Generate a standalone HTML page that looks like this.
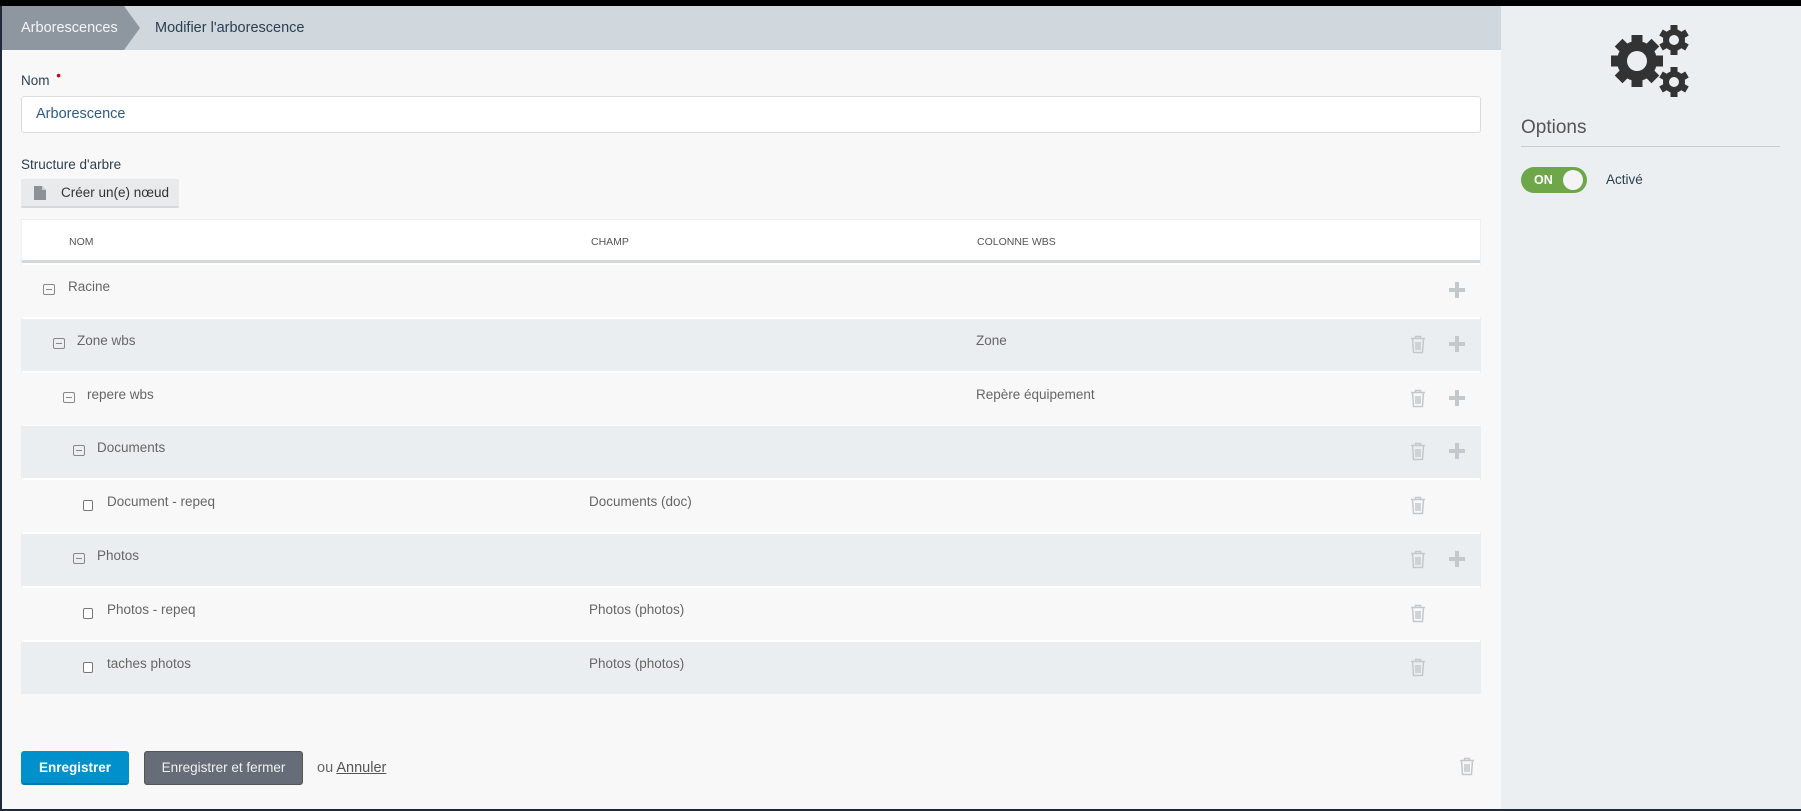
<!DOCTYPE html>
<html><head><meta charset="utf-8"><style>
*{box-sizing:border-box;margin:0;padding:0}
body{width:1801px;height:811px;overflow:hidden;background:#1e2a38;font-family:"Liberation Sans",sans-serif;position:relative}
.topb{position:absolute;left:0;top:0;width:1801px;height:6px;background:#000}
.main{position:absolute;left:2px;top:6px;width:1499px;height:803px;background:#f8f8f8}
.side{position:absolute;left:1501px;top:6px;width:300px;height:803px;background:#eceff1}
.hdr{position:absolute;left:0;top:0;width:1499px;height:44px;background:#d0d8de}
.crumb1{position:absolute;left:0;top:0;width:122px;height:44px;background:#8e969f;color:#f4f6f8;font-size:14.5px;line-height:44px;padding-left:19px}
.arrow{position:absolute;left:122px;top:0;width:0;height:0;border-top:22px solid transparent;border-bottom:22px solid transparent;border-left:16px solid #8e969f}
.crumb2{position:absolute;left:153px;top:0;line-height:44px;font-size:14.5px;color:#2c3e50}
.abs{position:absolute}
.lbl{font-size:13.5px;color:#2c3e50}
.row{position:absolute;left:19px;width:1460px;height:52px;font-size:13.5px;color:#666}
.row span{position:absolute;top:14px}
.mi{position:absolute;top:19px;width:12px;height:11px;border:1px solid #888;border-radius:2px}
.mi:after{content:"";position:absolute;left:2px;top:4px;width:6px;height:1px;background:#888}
.cb{position:absolute;top:20px;width:10px;height:11px;border:1px solid #777;border-radius:2px;background:#fff}
.tr{position:absolute;left:1389px;top:16px}
.pl{position:absolute;left:1428px;top:17px}
</style></head><body>
<div class="topb"></div>
<div class="main">
 <div class="hdr"><div class="crumb1">Arborescences</div><div class="arrow"></div><div class="crumb2">Modifier l'arborescence</div></div>
 <div class="abs lbl" style="left:19px;top:67px">Nom <span style="color:#d0021b;position:relative;top:-5px;left:3px">•</span></div>
 <div class="abs" style="left:19px;top:90px;width:1460px;height:37px;background:#fff;border:1px solid #d8dcdf;border-radius:3px;font-size:14.5px;color:#2a5c8a;line-height:35px;padding-left:14px">Arborescence</div>
 <div class="abs lbl" style="left:19px;top:151px">Structure d'arbre</div>
 <div class="abs" style="left:19px;top:173px;width:158px;height:29px;background:#e8eaec;border-bottom:2px solid #d4d8db;border-radius:2px;font-size:13.5px;color:#333;line-height:28px;padding-left:40px">
  <svg class="abs" style="left:13px;top:7px" width="12" height="14" viewBox="0 0 12 14"><path d="M0 0H8L12 4V14H0Z" fill="#8a9198"/><path d="M8 0V4H12" fill="#c9ced2"/></svg>Créer un(e) nœud</div>
 <div class="abs" style="left:19px;top:213px;width:1460px;height:475px;background:#fff;border:1px solid #eceef0;border-bottom:2px solid #d4d8db">
  <div class="abs" style="left:0;top:0;width:1458px;height:43px;border-bottom:3px solid #d4d8db;font-size:10.5px;color:#555">
   <span class="abs" style="left:47px;top:16px">NOM</span><span class="abs" style="left:569px;top:16px">CHAMP</span><span class="abs" style="left:955px;top:16px">COLONNE WBS</span>
  </div>
 </div>
 <div class="row" style="top:259px;background:#f8f8f8"><div class="mi" style="left:22px"></div><span style="left:47px">Racine</span>
  <svg class="pl" width="16" height="16" viewBox="0 0 16 16"><path d="M6 0h4v6h6v4h-6v6h-4v-6h-6v-4h6z" fill="#c3c8cd"/></svg></div>
 <div class="row" style="top:313px;background:#ebeef0"><div class="mi" style="left:32px"></div><span style="left:56px">Zone wbs</span><span style="left:955px">Zone</span>
  <svg class="tr" width="16" height="19" viewBox="0 0 16 19"><path d="M1 3.5h14M5.5 3.5V1.5h5v2M2.5 3.5l1 14h9l1-14M6 7v8M8 7v8M10 7v8" stroke="#c3c8cd" stroke-width="1.5" fill="none"/></svg>
  <svg class="pl" width="16" height="16" viewBox="0 0 16 16"><path d="M6 0h4v6h6v4h-6v6h-4v-6h-6v-4h6z" fill="#c3c8cd"/></svg></div>
 <div class="row" style="top:367px;background:#f8f8f8"><div class="mi" style="left:42px"></div><span style="left:66px">repere wbs</span><span style="left:955px">Repère équipement</span>
  <svg class="tr" width="16" height="19" viewBox="0 0 16 19"><path d="M1 3.5h14M5.5 3.5V1.5h5v2M2.5 3.5l1 14h9l1-14M6 7v8M8 7v8M10 7v8" stroke="#c3c8cd" stroke-width="1.5" fill="none"/></svg>
  <svg class="pl" width="16" height="16" viewBox="0 0 16 16"><path d="M6 0h4v6h6v4h-6v6h-4v-6h-6v-4h6z" fill="#c3c8cd"/></svg></div>
 <div class="row" style="top:420px;background:#ebeef0"><div class="mi" style="left:52px"></div><span style="left:76px">Documents</span>
  <svg class="tr" width="16" height="19" viewBox="0 0 16 19"><path d="M1 3.5h14M5.5 3.5V1.5h5v2M2.5 3.5l1 14h9l1-14M6 7v8M8 7v8M10 7v8" stroke="#c3c8cd" stroke-width="1.5" fill="none"/></svg>
  <svg class="pl" width="16" height="16" viewBox="0 0 16 16"><path d="M6 0h4v6h6v4h-6v6h-4v-6h-6v-4h6z" fill="#c3c8cd"/></svg></div>
 <div class="row" style="top:474px;background:#f8f8f8"><div class="cb" style="left:62px"></div><span style="left:86px">Document - repeq</span><span style="left:568px">Documents (doc)</span>
  <svg class="tr" width="16" height="19" viewBox="0 0 16 19"><path d="M1 3.5h14M5.5 3.5V1.5h5v2M2.5 3.5l1 14h9l1-14M6 7v8M8 7v8M10 7v8" stroke="#c3c8cd" stroke-width="1.5" fill="none"/></svg></div>
 <div class="row" style="top:528px;background:#ebeef0"><div class="mi" style="left:52px"></div><span style="left:76px">Photos</span>
  <svg class="tr" width="16" height="19" viewBox="0 0 16 19"><path d="M1 3.5h14M5.5 3.5V1.5h5v2M2.5 3.5l1 14h9l1-14M6 7v8M8 7v8M10 7v8" stroke="#c3c8cd" stroke-width="1.5" fill="none"/></svg>
  <svg class="pl" width="16" height="16" viewBox="0 0 16 16"><path d="M6 0h4v6h6v4h-6v6h-4v-6h-6v-4h6z" fill="#c3c8cd"/></svg></div>
 <div class="row" style="top:582px;background:#f8f8f8"><div class="cb" style="left:62px"></div><span style="left:86px">Photos - repeq</span><span style="left:568px">Photos (photos)</span>
  <svg class="tr" width="16" height="19" viewBox="0 0 16 19"><path d="M1 3.5h14M5.5 3.5V1.5h5v2M2.5 3.5l1 14h9l1-14M6 7v8M8 7v8M10 7v8" stroke="#c3c8cd" stroke-width="1.5" fill="none"/></svg></div>
 <div class="row" style="top:636px;background:#ebeef0"><div class="cb" style="left:62px"></div><span style="left:86px">taches photos</span><span style="left:568px">Photos (photos)</span>
  <svg class="tr" width="16" height="19" viewBox="0 0 16 19"><path d="M1 3.5h14M5.5 3.5V1.5h5v2M2.5 3.5l1 14h9l1-14M6 7v8M8 7v8M10 7v8" stroke="#c3c8cd" stroke-width="1.5" fill="none"/></svg></div>
 <div class="abs" style="left:19px;top:745px;width:108px;height:34px;background:#0091cd;border-bottom:2px solid #0079ad;border-radius:3px;color:#fff;font-weight:bold;font-size:13.5px;text-align:center;line-height:33px">Enregistrer</div>
 <div class="abs" style="left:142px;top:745px;width:159px;height:34px;background:#666d78;border:1px solid #555;border-radius:3px;color:#f0f0f0;font-size:13.5px;text-align:center;line-height:32px">Enregistrer et fermer</div>
 <div class="abs" style="left:315px;top:754px;font-size:14.5px;color:#666">ou <span style="text-decoration:underline;color:#555">Annuler</span></div>
 <svg class="abs" style="left:1457px;top:751px" width="16" height="19" viewBox="0 0 16 19"><path d="M1 3.5h14M5.5 3.5V1.5h5v2M2.5 3.5l1 14h9l1-14M6 7v8M8 7v8M10 7v8" stroke="#c3c8cd" stroke-width="1.5" fill="none"/></svg>
</div>
<div class="side">
 <svg class="abs" style="left:0;top:0" width="300" height="110" viewBox="0 0 300 110">
  <g fill="#333" transform="translate(136,55)">
   <g id="bt"><rect x="-5.5" y="-26" width="11" height="52"/></g>
   <use href="#bt" transform="rotate(45)"/><use href="#bt" transform="rotate(90)"/><use href="#bt" transform="rotate(135)"/>
   <circle r="20"/><circle r="10" fill="#eceff1"/>
  </g>
  <g fill="#333" transform="translate(173,34)">
   <g id="st"><rect x="-3.5" y="-15" width="7" height="30"/></g>
   <use href="#st" transform="rotate(60)"/><use href="#st" transform="rotate(120)"/>
   <circle r="11"/><circle r="5" fill="#eceff1"/>
  </g>
  <g fill="#333" transform="translate(173,76)">
   <use href="#st"/><use href="#st" transform="rotate(60)"/><use href="#st" transform="rotate(120)"/>
   <circle r="11"/><circle r="5" fill="#eceff1"/>
  </g>
 </svg>
 <div class="abs" style="left:20px;top:111px;font-size:19px;color:#555">Options</div>
 <div class="abs" style="left:20px;top:140px;width:259px;height:1px;background:#c8cdd1"></div>
 <div class="abs" style="left:20px;top:161px;width:66px;height:26px;background:#6ea64a;border-radius:13px;color:#fff;font-weight:bold;font-size:12.5px;line-height:26px;padding-left:13px">ON<div class="abs" style="left:42px;top:3px;width:20px;height:20px;border-radius:50%;background:#f4f4f4"></div></div>
 <div class="abs" style="left:105px;top:166px;font-size:13.5px;color:#2c3e50">Activé</div>
</div>
</body></html>
